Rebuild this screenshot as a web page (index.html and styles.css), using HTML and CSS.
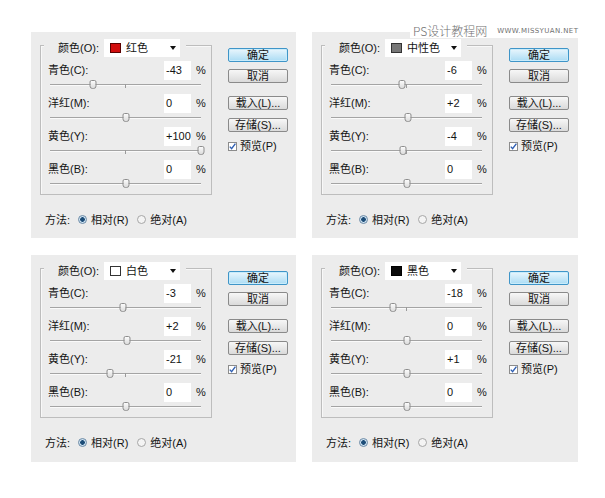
FILE: index.html
```html
<!DOCTYPE html>
<html lang="zh-CN">
<head>
<meta charset="utf-8">
<title>可选颜色</title>
<link rel="stylesheet" href="styles.css">
</head>
<body>
<div class="page">
  <div class="watermark"><span class="wm-cn">PS设计教程网</span><span class="wm-en">WWW.MISSYUAN.NET</span></div>
  <div class="grid">

    <div class="panel">
      <div class="group">
        <div class="legend"><span class="legend-label">颜色(O):</span><div class="select"><span class="swatch red"></span><span class="select-text">红色</span><span class="caret"></span></div></div>
        <div class="rows">
          <div class="row"><div class="field"><span class="label">青色(C):</span><span class="input">-43</span><span class="pct">%</span></div><div class="slider"><span class="tick"></span><span class="thumb" style="left:28.5%"></span></div></div>
          <div class="row"><div class="field"><span class="label">洋红(M):</span><span class="input">0</span><span class="pct">%</span></div><div class="slider"><span class="tick"></span><span class="thumb" style="left:50%"></span></div></div>
          <div class="row"><div class="field"><span class="label">黄色(Y):</span><span class="input">+100</span><span class="pct">%</span></div><div class="slider"><span class="tick"></span><span class="thumb" style="left:100%"></span></div></div>
          <div class="row"><div class="field"><span class="label">黑色(B):</span><span class="input">0</span><span class="pct">%</span></div><div class="slider"><span class="tick"></span><span class="thumb" style="left:50%"></span></div></div>
        </div>
      </div>
      <div class="side">
        <div class="btn primary">确定</div>
        <div class="btn b-cancel">取消</div>
        <div class="btn b-load">载入(L)...</div>
        <div class="btn b-save">存储(S)...</div>
        <div class="check"><span class="box"><svg viewBox="0 0 9 9" width="9" height="9"><path d="M1.8 4.6 L3.6 6.6 L7.4 1.6" fill="none" stroke="#2f5fb3" stroke-width="1.4"/></svg></span><span>预览(P)</span></div>
      </div>
      <div class="method"><span class="m-label">方法:</span><span class="radio on"></span><span class="r-text">相对(R)</span><span class="radio"></span><span class="r-text">绝对(A)</span></div>
    </div>

    <div class="panel">
      <div class="group">
        <div class="legend"><span class="legend-label">颜色(O):</span><div class="select"><span class="swatch gray"></span><span class="select-text">中性色</span><span class="caret"></span></div></div>
        <div class="rows">
          <div class="row"><div class="field"><span class="label">青色(C):</span><span class="input">-6</span><span class="pct">%</span></div><div class="slider"><span class="tick"></span><span class="thumb" style="left:47%"></span></div></div>
          <div class="row"><div class="field"><span class="label">洋红(M):</span><span class="input">+2</span><span class="pct">%</span></div><div class="slider"><span class="tick"></span><span class="thumb" style="left:51%"></span></div></div>
          <div class="row"><div class="field"><span class="label">黄色(Y):</span><span class="input">-4</span><span class="pct">%</span></div><div class="slider"><span class="tick"></span><span class="thumb" style="left:48%"></span></div></div>
          <div class="row"><div class="field"><span class="label">黑色(B):</span><span class="input">0</span><span class="pct">%</span></div><div class="slider"><span class="tick"></span><span class="thumb" style="left:50%"></span></div></div>
        </div>
      </div>
      <div class="side">
        <div class="btn primary">确定</div>
        <div class="btn b-cancel">取消</div>
        <div class="btn b-load">载入(L)...</div>
        <div class="btn b-save">存储(S)...</div>
        <div class="check"><span class="box"><svg viewBox="0 0 9 9" width="9" height="9"><path d="M1.8 4.6 L3.6 6.6 L7.4 1.6" fill="none" stroke="#2f5fb3" stroke-width="1.4"/></svg></span><span>预览(P)</span></div>
      </div>
      <div class="method"><span class="m-label">方法:</span><span class="radio on"></span><span class="r-text">相对(R)</span><span class="radio"></span><span class="r-text">绝对(A)</span></div>
    </div>

    <div class="panel">
      <div class="group">
        <div class="legend"><span class="legend-label">颜色(O):</span><div class="select"><span class="swatch white"></span><span class="select-text">白色</span><span class="caret"></span></div></div>
        <div class="rows">
          <div class="row"><div class="field"><span class="label">青色(C):</span><span class="input">-3</span><span class="pct">%</span></div><div class="slider"><span class="tick"></span><span class="thumb" style="left:48.5%"></span></div></div>
          <div class="row"><div class="field"><span class="label">洋红(M):</span><span class="input">+2</span><span class="pct">%</span></div><div class="slider"><span class="tick"></span><span class="thumb" style="left:51%"></span></div></div>
          <div class="row"><div class="field"><span class="label">黄色(Y):</span><span class="input">-21</span><span class="pct">%</span></div><div class="slider"><span class="tick"></span><span class="thumb" style="left:39.5%"></span></div></div>
          <div class="row"><div class="field"><span class="label">黑色(B):</span><span class="input">0</span><span class="pct">%</span></div><div class="slider"><span class="tick"></span><span class="thumb" style="left:50%"></span></div></div>
        </div>
      </div>
      <div class="side">
        <div class="btn primary">确定</div>
        <div class="btn b-cancel">取消</div>
        <div class="btn b-load">载入(L)...</div>
        <div class="btn b-save">存储(S)...</div>
        <div class="check"><span class="box"><svg viewBox="0 0 9 9" width="9" height="9"><path d="M1.8 4.6 L3.6 6.6 L7.4 1.6" fill="none" stroke="#2f5fb3" stroke-width="1.4"/></svg></span><span>预览(P)</span></div>
      </div>
      <div class="method"><span class="m-label">方法:</span><span class="radio on"></span><span class="r-text">相对(R)</span><span class="radio"></span><span class="r-text">绝对(A)</span></div>
    </div>

    <div class="panel">
      <div class="group">
        <div class="legend"><span class="legend-label">颜色(O):</span><div class="select"><span class="swatch black"></span><span class="select-text">黑色</span><span class="caret"></span></div></div>
        <div class="rows">
          <div class="row"><div class="field"><span class="label">青色(C):</span><span class="input">-18</span><span class="pct">%</span></div><div class="slider"><span class="tick"></span><span class="thumb" style="left:41%"></span></div></div>
          <div class="row"><div class="field"><span class="label">洋红(M):</span><span class="input">0</span><span class="pct">%</span></div><div class="slider"><span class="tick"></span><span class="thumb" style="left:50%"></span></div></div>
          <div class="row"><div class="field"><span class="label">黄色(Y):</span><span class="input">+1</span><span class="pct">%</span></div><div class="slider"><span class="tick"></span><span class="thumb" style="left:50.5%"></span></div></div>
          <div class="row"><div class="field"><span class="label">黑色(B):</span><span class="input">0</span><span class="pct">%</span></div><div class="slider"><span class="tick"></span><span class="thumb" style="left:50%"></span></div></div>
        </div>
      </div>
      <div class="side">
        <div class="btn primary">确定</div>
        <div class="btn b-cancel">取消</div>
        <div class="btn b-load">载入(L)...</div>
        <div class="btn b-save">存储(S)...</div>
        <div class="check"><span class="box"><svg viewBox="0 0 9 9" width="9" height="9"><path d="M1.8 4.6 L3.6 6.6 L7.4 1.6" fill="none" stroke="#2f5fb3" stroke-width="1.4"/></svg></span><span>预览(P)</span></div>
      </div>
      <div class="method"><span class="m-label">方法:</span><span class="radio on"></span><span class="r-text">相对(R)</span><span class="radio"></span><span class="r-text">绝对(A)</span></div>
    </div>

  </div>
</div>
</body>
</html>
```

FILE: styles.css
```css
* { box-sizing: border-box; }
html, body { margin: 0; padding: 0; background: #ffffff; }
body {
  font-family: "Liberation Sans", "Noto Sans CJK SC", sans-serif;
  font-size: 11px;
  color: #141414;
  width: 605px;
  height: 498px;
  overflow: hidden;
}
.page { position: relative; width: 605px; height: 498px; }

.watermark {
  position: absolute;
  top: 23px;
  left: 410px;
  height: 15px;
  padding: 0 3px;
  background: #ffffff;
  display: flex;
  align-items: center;
  gap: 10px;
  color: #707070;
  white-space: nowrap;
}
.wm-cn { font-family: "Noto Sans CJK SC", sans-serif; font-weight: 300; font-size: 12px; }
.wm-en { font-family: "DejaVu Sans", sans-serif; font-size: 7px; letter-spacing: 0.4px; }

.grid {
  display: grid;
  grid-template-columns: 265px 266px;
  grid-template-rows: 206px 207px;
  column-gap: 16px;
  row-gap: 17px;
  padding: 32px 0 0 31px;
}

.panel {
  background: #ececec;
  display: grid;
  grid-template-columns: 172px 60px;
  grid-template-rows: auto auto;
  column-gap: 16px;
  align-content: start;
  padding: 13px 0 0 9px;
}

.group {
  border: 1px solid #bdbdbd;
  box-shadow: inset 1px 1px 0 #f8f8f8;
  padding: 0 4px 1px 7px;
}
.legend {
  display: flex;
  align-items: center;
  width: max-content;
  height: 18px;
  margin: -7px 0 0 -4px;
  padding: 0 6px 0 14px;
  background: #ececec;
}
.legend-label { line-height: 18px; }
.select {
  margin-left: 5px;
  width: 76px;
  height: 18px;
  background: #ffffff;
  display: flex;
  align-items: center;
  padding: 0 4px 0 6px;
}
.swatch { width: 11px; height: 10px; border: 1px solid #333; flex: none; }
.swatch.red { background: #d10d0d; border-color: #5a0000; }
.swatch.gray { background: #777777; border-color: #333; }
.swatch.white { background: #ffffff; border-color: #333; }
.swatch.black { background: #0a0a0a; border-color: #000; }
.select-text { margin-left: 5px; flex: 1; line-height: 18px; }
.caret {
  width: 0; height: 0;
  border-left: 3px solid transparent;
  border-right: 3px solid transparent;
  border-top: 4px solid #111;
}

.rows { padding-top: 4px; }
.row { height: 33px; }
.field {
  display: grid;
  grid-template-columns: 116px 27px 14px;
  height: 19px;
  align-items: center;
}
.label { line-height: 19px; }
.input {
  background: #ffffff;
  height: 19px;
  line-height: 19px;
  padding-left: 2px;
  white-space: nowrap;
  overflow: hidden;
}
.pct { padding-left: 5px; line-height: 19px; }

.slider {
  position: relative;
  height: 14px;
  margin-left: 2px;
  width: 151px;
}
.slider::before {
  content: "";
  position: absolute;
  left: 0; right: 0;
  top: 4px;
  height: 1px;
  background: #a4a4a4;
  box-shadow: 0 1px 0 #fafafa;
}
.tick {
  position: absolute;
  left: 75px;
  top: 4px;
  width: 1px;
  height: 4px;
  background: #9a9a9a;
}
.thumb {
  position: absolute;
  top: 0;
  width: 7px;
  height: 9px;
  transform: translateX(-50%);
  border: 1px solid #8e8e8e;
  border-radius: 2px 2px 3px 3px;
  background: linear-gradient(#fbfbfb, #dcdcdc);
}

.side {
  padding-top: 3px;
  display: flex;
  flex-direction: column;
}
.btn {
  height: 14px;
  line-height: 12px;
  text-align: center;
  border: 1px solid #8a8a8a;
  border-radius: 2px;
  background: linear-gradient(#f7f7f7, #dadada);
  font-size: 11px;
}
.btn.primary {
  border-color: #3f95c8;
  background: linear-gradient(#e9f6fd, #abdcf4);
  box-shadow: inset 0 0 0 1px #c9ecfb;
}
.b-cancel { margin-top: 7px; }
.b-load { margin-top: 13px; }
.b-save { margin-top: 8px; }
.check {
  margin-top: 9px;
  display: flex;
  align-items: center;
  gap: 3px;
  height: 11px;
  line-height: 11px;
}
.box {
  width: 9px; height: 9px;
  border: 1px solid #8c8c8c;
  background: #ffffff;
  display: flex;
  align-items: center;
  justify-content: center;
}
.box svg { display: block; flex: none; }

.method {
  grid-column: 1 / 3;
  margin-top: 17px;
  margin-left: 5px;
  display: flex;
  align-items: center;
  height: 14px;
}
.m-label { margin-right: 8px; }
.radio {
  width: 9px; height: 9px;
  border-radius: 50%;
  border: 1px solid #a6a6a6;
  background: #f4f4f4;
  margin-right: 4px;
  flex: none;
}
.radio.on {
  border-color: #6b8aa6;
  background: radial-gradient(circle, #1d4d78 0 2px, #cfe3f2 2.6px);
}
.r-text { margin-right: 9px; }
```
